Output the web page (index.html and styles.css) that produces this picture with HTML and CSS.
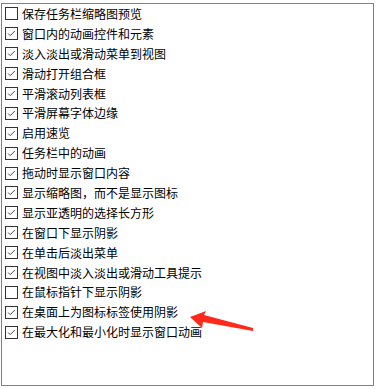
FILE: index.html
```html
<!DOCTYPE html>
<html lang="zh-CN">
<head>
<meta charset="utf-8">
<link rel="stylesheet" href="styles.css">
</head>
<body>
<div class="frame">
  <ul class="list">
    <li class="row"><span class="box"></span><span class="label">保存任务栏缩略图预览</span></li>
    <li class="row"><span class="box checked"><svg viewBox="0 0 13 13"><polyline points="2.5,6.5 5,9 10.5,3.5"/></svg></span><span class="label">窗口内的动画控件和元素</span></li>
    <li class="row"><span class="box checked"><svg viewBox="0 0 13 13"><polyline points="2.5,6.5 5,9 10.5,3.5"/></svg></span><span class="label">淡入淡出或滑动菜单到视图</span></li>
    <li class="row"><span class="box checked"><svg viewBox="0 0 13 13"><polyline points="2.5,6.5 5,9 10.5,3.5"/></svg></span><span class="label">滑动打开组合框</span></li>
    <li class="row"><span class="box checked"><svg viewBox="0 0 13 13"><polyline points="2.5,6.5 5,9 10.5,3.5"/></svg></span><span class="label">平滑滚动列表框</span></li>
    <li class="row"><span class="box checked"><svg viewBox="0 0 13 13"><polyline points="2.5,6.5 5,9 10.5,3.5"/></svg></span><span class="label">平滑屏幕字体边缘</span></li>
    <li class="row"><span class="box checked"><svg viewBox="0 0 13 13"><polyline points="2.5,6.5 5,9 10.5,3.5"/></svg></span><span class="label">启用速览</span></li>
    <li class="row"><span class="box checked"><svg viewBox="0 0 13 13"><polyline points="2.5,6.5 5,9 10.5,3.5"/></svg></span><span class="label">任务栏中的动画</span></li>
    <li class="row"><span class="box checked"><svg viewBox="0 0 13 13"><polyline points="2.5,6.5 5,9 10.5,3.5"/></svg></span><span class="label">拖动时显示窗口内容</span></li>
    <li class="row"><span class="box checked"><svg viewBox="0 0 13 13"><polyline points="2.5,6.5 5,9 10.5,3.5"/></svg></span><span class="label">显示缩略图，而不是显示图标</span></li>
    <li class="row"><span class="box checked"><svg viewBox="0 0 13 13"><polyline points="2.5,6.5 5,9 10.5,3.5"/></svg></span><span class="label">显示亚透明的选择长方形</span></li>
    <li class="row"><span class="box checked"><svg viewBox="0 0 13 13"><polyline points="2.5,6.5 5,9 10.5,3.5"/></svg></span><span class="label">在窗口下显示阴影</span></li>
    <li class="row"><span class="box checked"><svg viewBox="0 0 13 13"><polyline points="2.5,6.5 5,9 10.5,3.5"/></svg></span><span class="label">在单击后淡出菜单</span></li>
    <li class="row"><span class="box checked"><svg viewBox="0 0 13 13"><polyline points="2.5,6.5 5,9 10.5,3.5"/></svg></span><span class="label">在视图中淡入淡出或滑动工具提示</span></li>
    <li class="row"><span class="box"></span><span class="label">在鼠标指针下显示阴影</span></li>
    <li class="row"><span class="box checked"><svg viewBox="0 0 13 13"><polyline points="2.5,6.5 5,9 10.5,3.5"/></svg></span><span class="label">在桌面上为图标标签使用阴影</span></li>
    <li class="row"><span class="box checked"><svg viewBox="0 0 13 13"><polyline points="2.5,6.5 5,9 10.5,3.5"/></svg></span><span class="label">在最大化和最小化时显示窗口动画</span></li>
  </ul>
  <svg class="arrow" viewBox="0 0 70 24" width="70" height="24">
    <polygon points="5,13 21,7 19,11 68,24 68,27 18,18 17,24"/>
  </svg>
</div>
</body>
</html>
```

FILE: styles.css
```css
html, body {
  margin: 0;
  padding: 0;
  background: #ffffff;
}

body {
  font-family: "Noto Sans CJK SC", "Noto Sans", sans-serif;
  font-size: 12px;
  color: #000000;
}

.frame {
  position: relative;
  box-sizing: border-box;
  margin: 3px 0 0 1px;
  width: 373px;
  height: 383px;
  border: 1px solid #808080;
  background: #ffffff;
}

.list {
  list-style: none;
  margin: 0;
  padding: 0 0 0 3px;
  display: flex;
  flex-direction: column;
}

.row {
  height: 19.9px;
  display: flex;
  align-items: center;
  gap: 4px;
}

.box {
  box-sizing: border-box;
  width: 13px;
  height: 13px;
  border: 1px solid #333333;
  background: #ffffff;
  display: flex;
  flex: none;
}

.box svg {
  width: 11px;
  height: 11px;
}

.box svg polyline {
  fill: none;
  stroke: #404040;
  stroke-width: 1.1;
}

.label {
  line-height: 16px;
  white-space: nowrap;
}

.arrow {
  position: absolute;
  left: 183px;
  top: 300px;
  overflow: visible;
}

.arrow polygon {
  fill: #ff2a1c;
}
```
